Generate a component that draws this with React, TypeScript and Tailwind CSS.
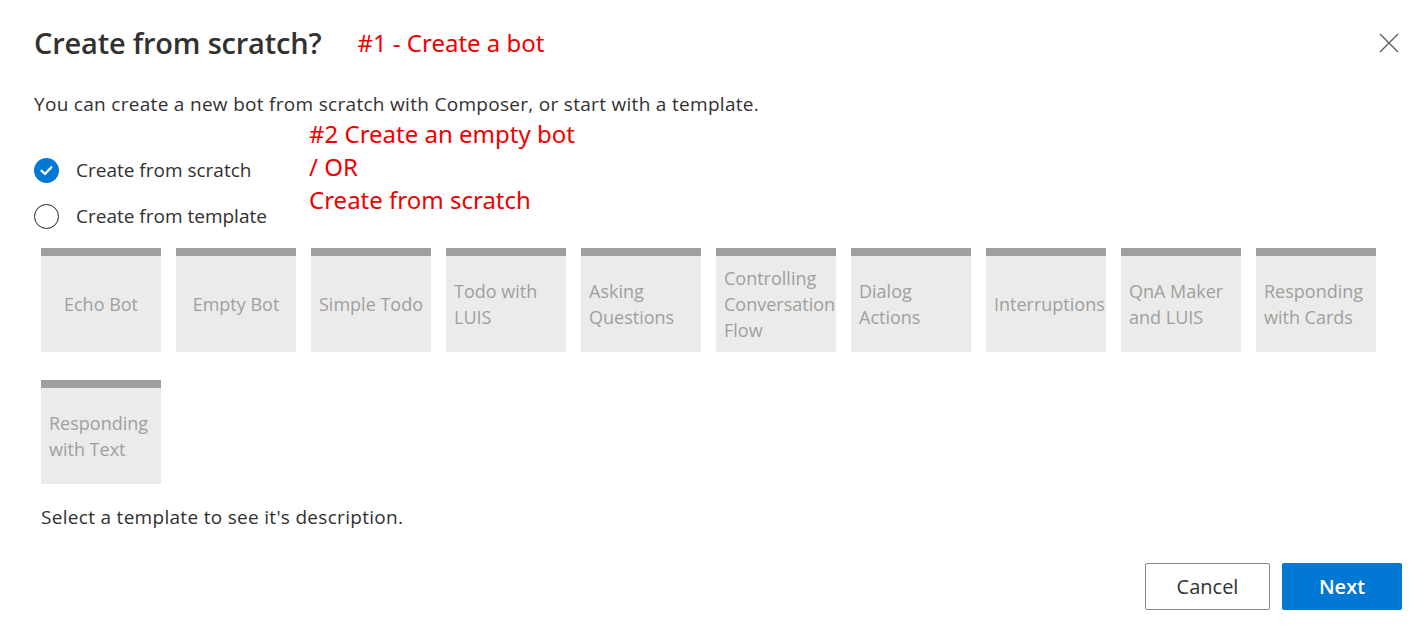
import React from "react";

const templates = [
  "Echo Bot",
  "Empty Bot",
  "Simple Todo",
  "Todo with LUIS",
  "Asking Questions",
  "Controlling Conversation Flow",
  "Dialog Actions",
  "Interruptions",
  "QnA Maker and LUIS",
  "Responding with Cards",
  "Responding with Text",
];

function Radio({ checked, label }: { checked: boolean; label: string }) {
  return (
    <div className="flex items-center gap-[17px] h-[26px]">
      {checked ? (
        <span className="w-[25px] h-[25px] rounded-full bg-[#0078d4] flex items-center justify-center">
          <svg width="15" height="15" viewBox="0 0 15 15" fill="none">
            <path d="M2.6 7.8 L6 11 L12.4 4.2" stroke="white" strokeWidth="2.3" strokeLinecap="round" strokeLinejoin="round" />
          </svg>
        </span>
      ) : (
        <span className="w-[25px] h-[25px] rounded-full border-[1.5px] border-[#201f1e] bg-white" />
      )}
      <span className="text-[19px] text-[#323130]">{label}</span>
    </div>
  );
}

export default function App() {
  return (
    <div
      className="w-[1425px] h-[636px] bg-white relative text-[#323130]"
      style={{ fontFamily: '"Open Sans", "Noto Sans", sans-serif' }}
    >
      <div className="pl-[34px] pr-[23px] pt-[21px]">
        {/* header */}
        <div className="flex items-center h-[44px]">
          <h1 className="text-[29px] font-semibold text-[#323130] tracking-[-0.2px]">Create from scratch?</h1>
          <span className="ml-[36px] text-[24px] text-[#f00000]" style={{ fontFamily: '"Noto Sans", "Open Sans", sans-serif' }}>
            #1 - Create a bot
          </span>
          <button className="ml-auto mr-[1px] w-[24px] h-[24px] flex items-center justify-center">
            <svg width="20" height="20" viewBox="0 0 20 20">
              <path d="M1 1 L19 19 M19 1 L1 19" stroke="#605e5c" strokeWidth="1.4" />
            </svg>
          </button>
        </div>

        <p className="mt-[27px] text-[19px] tracking-[0.3px] text-[#323130] leading-[24px]">
          You can create a new bot from scratch with Composer, or start with a template.
        </p>

        <div className="flex">
          <div className="flex flex-col gap-[20px] pt-[41px] w-[275px]">
            <Radio checked label="Create from scratch" />
            <Radio checked={false} label="Create from template" />
          </div>
          <div
            className="mt-[4px] flex flex-col gap-[5px] text-[24px] leading-[28px] text-[#f00000]"
            style={{ fontFamily: '"Noto Sans", "Open Sans", sans-serif' }}
          >
            <div>#2 Create an empty bot</div>
            <div>/ OR</div>
            <div>Create from scratch</div>
          </div>
        </div>

        {/* template tiles */}
        <div className="ml-[7px] mt-[19px] flex flex-wrap gap-x-[15px] gap-y-[28px] w-[1360px]">
          {templates.map((t) => (
            <div key={t} className="w-[120px] h-[104px] bg-[#ebebeb] border-t-[8px] border-[#a19f9d] flex items-center justify-center px-[8px]">
              <span className="min-w-0 text-[18px] leading-[26px] text-[#a19f9d]">{t}</span>
            </div>
          ))}
        </div>

        <p className="ml-[7px] mt-[20px] text-[19px] tracking-[0.3px] text-[#323130] leading-[26px]">
          Select a template to see it's description.
        </p>

        <div className="flex justify-end gap-[12px] mt-[33px]">
          <button className="w-[125px] h-[47px] rounded-[2px] border border-[#8a8886] bg-white text-[20px] text-[#323130]">
            Cancel
          </button>
          <button className="w-[120px] h-[47px] rounded-[2px] bg-[#0078d4] text-[20px] font-semibold text-white">
            Next
          </button>
        </div>
      </div>
    </div>
  );
}
